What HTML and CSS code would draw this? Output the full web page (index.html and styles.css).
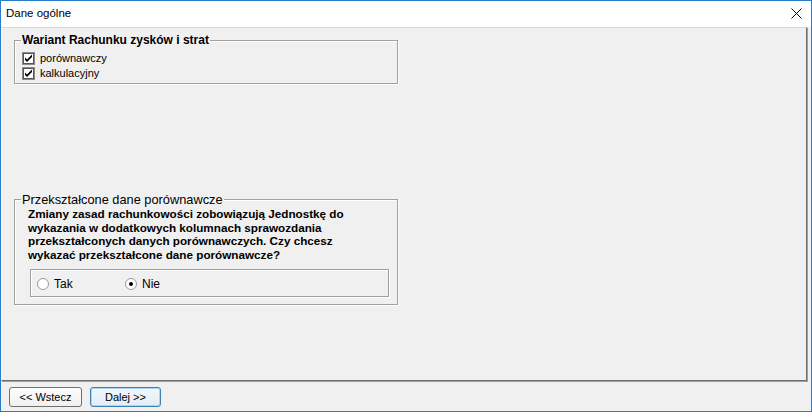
FILE: index.html
```html
<!DOCTYPE html>
<html lang="pl">
<head>
<meta charset="utf-8">
<title>Dane ogólne</title>
<link rel="stylesheet" href="styles.css">
</head>
<body>
<div class="window">
  <div class="titlebar">
    <span class="title">Dane ogólne</span>
    <svg class="close" width="11" height="11" viewBox="0 0 11 11"><path d="M0.5 0.5 L10.5 10.5 M10.5 0.5 L0.5 10.5" stroke="#000" stroke-width="1" fill="none"/></svg>
  </div>
  <div class="panel">
    <fieldset class="group group1">
      <legend class="legend bold">Wariant Rachunku zysków i strat</legend>
      <div class="group-body body1">
        <div class="check-row">
          <svg class="chk" width="13" height="13" viewBox="0 0 13 13"><rect x="0.5" y="0.5" width="12" height="12" fill="#fff" stroke="#8a8a8a"/><rect x="1.5" y="1.5" width="10" height="10" fill="#fff" stroke="#555" stroke-width="1"/><path d="M3 5.5 L5 7.5 L10 2.5 L10 5 L5 10 L3 8 Z" fill="#000"/></svg>
          <span>porównawczy</span>
        </div>
        <div class="check-row">
          <svg class="chk" width="13" height="13" viewBox="0 0 13 13"><rect x="0.5" y="0.5" width="12" height="12" fill="#fff" stroke="#8a8a8a"/><rect x="1.5" y="1.5" width="10" height="10" fill="#fff" stroke="#555" stroke-width="1"/><path d="M3 5.5 L5 7.5 L10 2.5 L10 5 L5 10 L3 8 Z" fill="#000"/></svg>
          <span>kalkulacyjny</span>
        </div>
      </div>
    </fieldset>
    <fieldset class="group group2">
      <legend class="legend legend2">Przekształcone dane porównawcze</legend>
      <div class="group-body body2">
        <p class="question">Zmiany zasad rachunkowości zobowiązują Jednostkę do wykazania w dodatkowych kolumnach sprawozdania przekształconych danych porównawczych. Czy chcesz wykazać przekształcone dane porównawcze?</p>
        <div class="radio-box">
          <div class="radio-item">
            <svg class="radio" width="12" height="12" viewBox="0 0 12 12"><circle cx="6" cy="6" r="5.5" fill="#fff" stroke="#9a9a9a"/></svg>
            <span>Tak</span>
          </div>
          <div class="radio-item">
            <svg class="radio" width="12" height="12" viewBox="0 0 12 12"><circle cx="6" cy="6" r="5.5" fill="#fff" stroke="#9a9a9a"/><circle cx="6" cy="6" r="2" fill="#000"/></svg>
            <span>Nie</span>
          </div>
        </div>
      </div>
    </fieldset>
  </div>
  <div class="buttons">
    <button class="btn">&lt;&lt; Wstecz</button>
    <button class="btn btn-default">Dalej &gt;&gt;</button>
  </div>
</div>
</body>
</html>
```
FILE: styles.css
```css
html, body {
  margin: 0;
  padding: 0;
  background: #f0f0f0;
}
body {
  width: 812px;
  height: 412px;
  overflow: hidden;
  font-family: "Liberation Sans", Arial, sans-serif;
  font-size: 11px;
  color: #000;
}
.window {
  box-sizing: border-box;
  width: 812px;
  height: 412px;
  border: 1px solid #2b7bc9;
  display: flex;
  flex-direction: column;
  background: #f0f0f0;
}
.titlebar {
  height: 26px;
  flex: none;
  background: #fff;
  display: flex;
  align-items: center;
  justify-content: space-between;
  padding: 0 9px 0 5px;
}
.title {
  font-size: 11.5px;
  padding-bottom: 2px;
}
.close {
  margin-bottom: 2px;
}
.panel {
  flex: 1;
  margin-right: 4px;
  border-top: 1px solid #d8d8d8;
  border-left: 1px solid #fff;
  border-right: 1px solid #6d6d6d;
  border-bottom: 1px solid #6d6d6d;
  box-shadow: 1px 1px 0 #a0a0a0;
  padding: 6px 0 0 12px;
  display: flex;
  flex-direction: column;
  align-items: flex-start;
}
.group {
  box-sizing: border-box;
  width: 384px;
  margin: 0;
  padding: 0;
  border: 1px solid #a0a0a0;
  box-shadow: inset 1px 1px 0 #fff, 1px 1px 0 #fff;
}
.legend {
  margin-left: 6px;
  padding: 0 1px;
  line-height: 13px;
}
.bold {
  font-weight: bold;
  font-size: 12px;
}
.legend2 {
  font-size: 12.8px;
}
.body1 {
  padding: 4px 0 2px 7px;
}
.group2 {
  margin-top: 109px;
}
.body2 {
  padding: 1px 8px 7px 15px;
}
.check-row {
  height: 15px;
  display: flex;
  align-items: center;
  gap: 5px;
}
.check-row span {
  line-height: 15px;
}
.question {
  margin: 0 0 0 -2px;
  font-weight: bold;
  font-size: 11.7px;
  line-height: 13.7px;
  width: 340px;
}
.radio-box {
  box-sizing: border-box;
  margin-top: 7px;
  height: 28px;
  border: 1px solid #a0a0a0;
  box-shadow: inset 1px 1px 0 #fff, 1px 1px 0 #fff;
  display: flex;
  align-items: center;
  padding: 2px 0 0 6px;
  font-size: 12px;
}
.radio-item {
  display: flex;
  align-items: center;
  gap: 5px;
  width: 88px;
}
.buttons {
  height: 30px;
  flex: none;
  display: flex;
  gap: 8px;
  padding: 6px 0 0 8px;
  box-sizing: border-box;
  align-items: flex-start;
}
.btn {
  font-family: "Liberation Sans", Arial, sans-serif;
  font-size: 11px;
  height: 20px;
  width: 73px;
  padding: 0;
  border: 1px solid #707070;
  border-radius: 3px;
  background: linear-gradient(#fdfdfd, #f0f0f0);
  color: #000;
}
.btn-default {
  width: 71px;
  border-color: #3c7fb1;
  box-shadow: inset 0 0 0 1px #a9d7f5;
  background: linear-gradient(#f2f7fb, #e3eef7);
}
```
